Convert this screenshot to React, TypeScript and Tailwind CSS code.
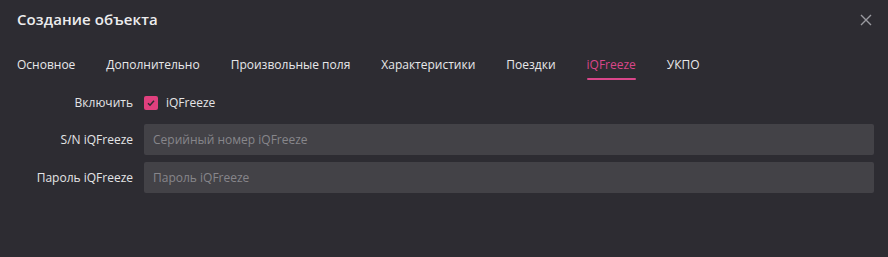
import React, { useState } from 'react';

const tabs = ['Основное', 'Дополнительно', 'Произвольные поля', 'Характеристики', 'Поездки', 'iQFreeze', 'УКПО'];

export default function App() {
  const [active, setActive] = useState('iQFreeze');
  const [enabled, setEnabled] = useState(true);

  return (
    <div
      className="w-[888px] h-[257px] bg-[#2d2c32] text-[#e4e4e6] overflow-hidden"
      style={{ fontFamily: '"Open Sans", "Noto Sans", sans-serif' }}
    >
      {/* Header */}
      <div className="flex items-center justify-between pl-[17px] pr-[16px] pt-[3px] h-[36px]">
        <h1 className="text-[15px] font-semibold text-[#ececee] tracking-[0.1px]">Создание объекта</h1>
        <button className="text-[#9a9aa0] hover:text-white">
          <svg width="12" height="12" viewBox="0 0 12 12" fill="none" stroke="currentColor" strokeWidth="1.4">
            <path d="M1 1L11 11M11 1L1 11" />
          </svg>
        </button>
      </div>

      {/* Tabs */}
      <div className="flex gap-[31px] pl-[17px] mt-[20px]">
        {tabs.map((tab) => (
          <button
            key={tab}
            onClick={() => setActive(tab)}
            className={`relative text-[12px] pb-[7px] leading-[18px] ${
              active === tab ? 'text-[#d9468a]' : 'text-[#e8e8ea]'
            }`}
          >
            {tab}
            {active === tab && (
              <span className="absolute left-0 right-0 bottom-[1px] h-[2px] rounded bg-[#d9468a]" />
            )}
          </button>
        ))}
      </div>

      {/* Form */}
      <div className="flex flex-col gap-[7px] mt-[12px] pr-[14px]">
        <div className="flex items-center h-[20px]">
          <label className="w-[133px] text-right text-[12px]">Включить</label>
          <label className="flex items-center gap-[8px] ml-[11px] cursor-pointer">
            <span
              onClick={() => setEnabled(!enabled)}
              className={`w-[14px] h-[14px] rounded-[2px] flex items-center justify-center ${
                enabled ? 'bg-[#e0407e]' : 'bg-[#434247]'
              }`}
            >
              {enabled && (
                <svg width="10" height="10" viewBox="0 0 10 10" fill="none" stroke="#2d2c32" strokeWidth="1.5">
                  <path d="M2 5.2L4 7.2L8 2.8" />
                </svg>
              )}
            </span>
            <span className="text-[12px]">iQFreeze</span>
          </label>
        </div>

        <div className="flex items-center mt-[4px]">
          <label className="w-[133px] text-right text-[12px]">S/N iQFreeze</label>
          <input
            placeholder="Серийный номер iQFreeze"
            className="ml-[11px] flex-1 h-[31px] rounded-[2px] bg-[#434247] px-[9px] text-[12px] outline-none placeholder:text-[#87868b]"
          />
        </div>

        <div className="flex items-center">
          <label className="w-[133px] text-right text-[12px]">Пароль iQFreeze</label>
          <input
            placeholder="Пароль iQFreeze"
            className="ml-[11px] flex-1 h-[31px] rounded-[2px] bg-[#434247] px-[9px] text-[12px] outline-none placeholder:text-[#87868b]"
          />
        </div>
      </div>
    </div>
  );
}
